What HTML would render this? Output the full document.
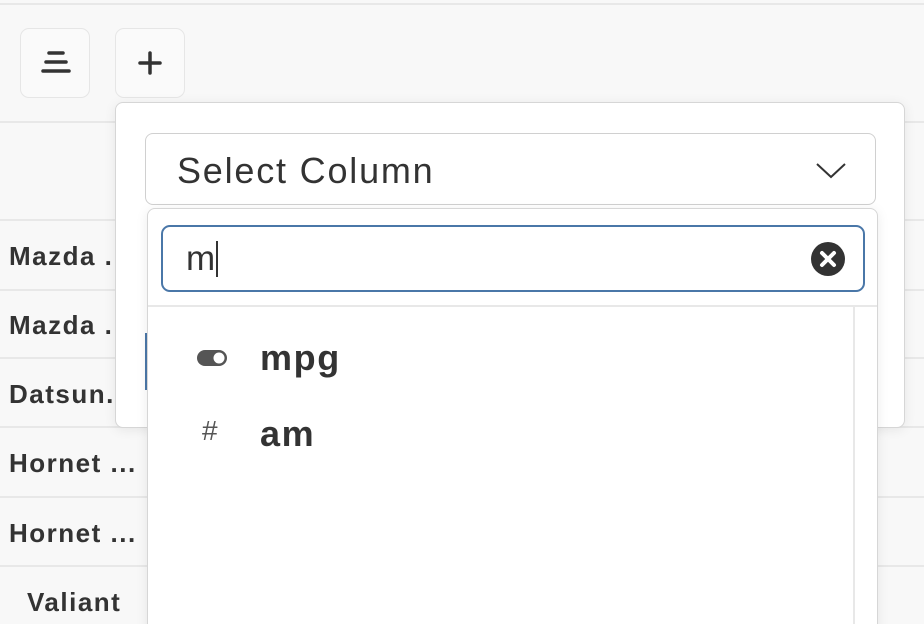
<!DOCTYPE html>
<html><head><style>
html,body{margin:0;width:924px;height:624px;overflow:hidden}
body{background:#f8f8f8;font-family:"Liberation Sans",sans-serif;color:#333;position:relative}
#w{position:absolute;left:0;top:0;width:924px;height:624px;overflow:hidden}
.abs{position:absolute}
.hl{position:absolute;left:0;width:924px;height:2px;background:#e8e8e8}
.btn{position:absolute;top:28px;width:68px;height:68px;border:1px solid #e6e6e6;border-radius:9px;background:#fafafa}
.row{position:absolute;left:9px;font-weight:bold;font-size:26px;letter-spacing:1.5px;color:#333}
</style></head><body><div id="w">
<div class="hl" style="top:3px"></div>
<div class="hl" style="top:121px"></div>
<div class="hl" style="top:219px"></div>
<div class="hl" style="top:289px"></div>
<div class="hl" style="top:357px"></div>
<div class="hl" style="top:426px"></div>
<div class="hl" style="top:496px"></div>
<div class="hl" style="top:565px"></div>
<div class="btn" style="left:20px"><svg width="68" height="68"><g stroke="#333" stroke-width="3.5" stroke-linecap="round"><line x1="28" y1="24" x2="42" y2="24"/><line x1="25" y1="33" x2="45" y2="33"/><line x1="22" y1="42" x2="48" y2="42"/></g></svg></div>
<div class="btn" style="left:115px"><svg width="68" height="68"><g stroke="#333" stroke-width="3.5" stroke-linecap="round"><line x1="24" y1="34" x2="44" y2="34"/><line x1="34" y1="24" x2="34" y2="44"/></g></svg></div>
<div class="row" style="top:241px">Mazda .</div>
<div class="row" style="top:310px">Mazda .</div>
<div class="row" style="top:379px">Datsun.</div>
<div class="row" style="top:448px">Hornet ...</div>
<div class="row" style="top:518px">Hornet ...</div>
<div class="row" style="top:587px;left:27px">Valiant</div>
<div class="abs" style="left:115px;top:102px;width:788px;height:324px;background:#fff;border:1px solid #d6d6d6;border-radius:8px;box-shadow:0 2px 12px rgba(0,0,0,.08)"></div>
<div class="abs" style="left:145px;top:333px;width:3px;height:57px;background:#4a77a8"></div>
<div class="abs" style="left:145px;top:133px;width:729px;height:70px;border:1px solid #d0d0d0;border-radius:8px;background:#fff">
<div class="abs" style="left:31px;top:16px;font-size:36px;letter-spacing:1.8px;color:#333">Select Column</div>
<svg class="abs" style="left:668px;top:24px" width="34" height="24"><polyline points="3,6 17,19 31,6" fill="none" stroke="#333" stroke-width="2"/></svg>
</div>
<div class="abs" style="left:147px;top:208px;width:729px;height:440px;border:1px solid #d6d6d6;border-radius:8px;background:#fff;box-shadow:0 2px 12px rgba(0,0,0,.08)">
<div class="abs" style="left:13px;top:16px;width:700px;height:63px;border:2px solid #4a77a8;border-radius:9px">
<div class="abs" style="left:23px;top:12px;font-size:35px;color:#333">m</div>
<div class="abs" style="left:53px;top:14px;width:2px;height:36px;background:#333"></div>
<svg class="abs" style="left:647px;top:14px" width="36" height="36"><circle cx="18" cy="18" r="17" fill="#333"/><g stroke="#fff" stroke-width="4" stroke-linecap="round"><line x1="12" y1="12" x2="24" y2="24"/><line x1="24" y1="12" x2="12" y2="24"/></g></svg>
</div>
<div class="abs" style="left:0;top:96px;width:729px;height:2px;background:#e8e8e8"></div>
<div class="abs" style="left:705px;top:98px;width:2px;height:340px;background:#e8e8e8"></div>
<svg class="abs" style="left:48px;top:140px" width="32" height="18"><rect x="1" y="1" width="30" height="16" rx="8" fill="#555"/><circle cx="23" cy="9" r="5.5" fill="#fff"/></svg>
<div class="abs" style="left:112px;top:128px;font-size:36px;font-weight:bold;letter-spacing:1.6px;color:#333">mpg</div>
<div class="abs" style="left:54px;top:206px;font-size:28px;color:#555">#</div>
<div class="abs" style="left:112px;top:204px;font-size:36px;font-weight:bold;letter-spacing:1.6px;color:#333">am</div>
</div>
</div></body></html>
